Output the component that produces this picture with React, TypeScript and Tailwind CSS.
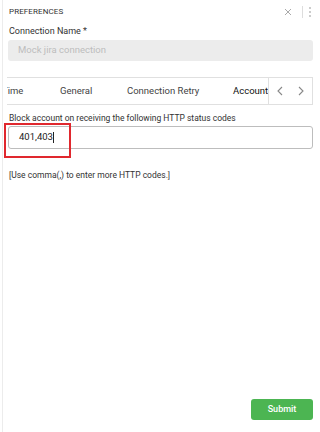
import React from "react";

export default function App() {
  return (
    <div className="w-[320px] h-[432px] bg-white relative overflow-hidden" style={{ fontFamily: "Roboto, 'Liberation Sans', sans-serif" }}>
      <div className="absolute left-[2px] top-0 bottom-0 w-px bg-[#ececec]" />
      <div className="flex flex-col h-full pl-[8px] pr-[7px]">
        <div className="flex items-center h-[23px] pl-[1px] pt-[1px]">
          <span className="text-[8px] text-[#333] tracking-[0.1px]">PREFERENCES</span>
          <div className="ml-auto flex items-center">
            <svg width="8" height="8" viewBox="0 0 8 8" className="mr-[10px]">
              <path d="M1 1 L7 7 M7 1 L1 7" stroke="#aaa" strokeWidth="1" />
            </svg>
            <div className="w-px h-[12px] bg-[#ddd] mr-[6px]" />
            <div className="flex flex-col gap-[2px] mr-[2px]">
              <div className="w-[2px] h-[2px] bg-[#bbb] rounded-full" />
              <div className="w-[2px] h-[2px] bg-[#bbb] rounded-full" />
              <div className="w-[2px] h-[2px] bg-[#bbb] rounded-full" />
            </div>
          </div>
        </div>
        <div className="text-[9px] text-[#333] mt-[2px] pl-[1px] leading-[12px]">Connection Name *</div>
        <div className="mt-[3px] h-[21px] rounded-[3px] bg-[#ececec] flex items-center pl-[10px]">
          <span className="text-[9.5px] text-[#bdbdbd]">Mock jira connection</span>
        </div>
        <div className="mt-[16px] -ml-[1px] h-[28px] border-y border-[#e0e0e0] flex items-stretch relative">
          <div className="flex-1 overflow-hidden relative">
            <div className="absolute top-0 bottom-0 left-[-5px] flex items-center text-[9.5px] text-[#444] whitespace-nowrap pt-[1px]">
              <span className="w-[58px]">Time</span>
              <span className="w-[67px]">General</span>
              <span className="w-[90px]">Connection Retry</span>
              <span className="relative text-[#111] h-full flex items-center px-[16px]">
                Account
                <span className="absolute left-0 right-0 bottom-[-1px] h-[1px] bg-[#333]" />
              </span>
            </div>
          </div>
          <div className="w-[45px] border-l border-r border-[#e0e0e0] flex items-center justify-around -mt-px -mb-px border-y bg-white">
            <svg width="6" height="10" viewBox="0 0 6 10"><path d="M5 1 L1 5 L5 9" stroke="#888" fill="none" strokeWidth="1.1" /></svg>
            <svg width="6" height="10" viewBox="0 0 6 10"><path d="M1 1 L5 5 L1 9" stroke="#888" fill="none" strokeWidth="1.1" /></svg>
          </div>
        </div>
        <div className="text-[8.5px] text-[#333] mt-[7px] pl-[1px] leading-[12px]">Block account on receiving the following HTTP status codes</div>
        <div className="relative mt-[2px] h-[23px] rounded-[3px] border border-[#bdbdbd] flex items-center pl-[10px]">
          <span className="text-[9.5px] text-[#222]">401,403</span>
          <span className="w-px h-[11px] bg-[#222]" />
          <div className="absolute left-[-5px] top-[-4px] w-[67px] h-[35px] border-2 border-[#e0282e]" />
        </div>
        <div className="text-[8.5px] text-[#333] mt-[20px] pl-[1px]">[Use comma(,) to enter more HTTP codes.]</div>
        <div className="mt-auto mb-[12px] flex justify-end">
          <button className="w-[62px] h-[21px] rounded-[3px] bg-[#4cb552] text-white text-[9px] font-medium">Submit</button>
        </div>
      </div>
    </div>
  );
}
